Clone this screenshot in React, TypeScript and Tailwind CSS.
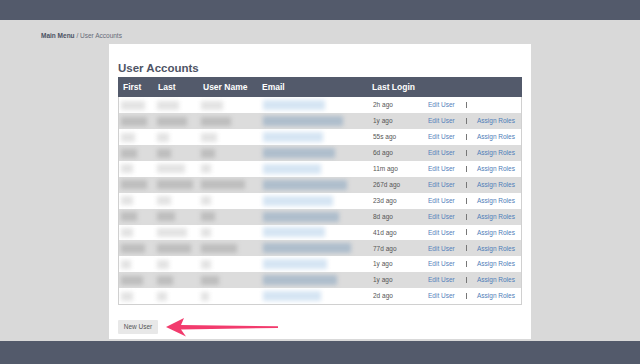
import React from 'react';

const times = [
  '2h ago',
  '1y ago',
  '55s ago',
  '6d ago',
  '11m ago',
  '267d ago',
  '23d ago',
  '8d ago',
  '41d ago',
  '77d ago',
  '1y ago',
  '1y ago',
  '2d ago',
];

// widths of the blurred-out name / email blocks, one per row
const firstW = [24, 26, 14, 16, 12, 26, 12, 16, 12, 24, 10, 22, 12];
const lastW = [22, 30, 12, 14, 28, 36, 14, 18, 30, 34, 12, 16, 10];
const userW = [22, 30, 16, 14, 10, 44, 10, 14, 10, 36, 10, 18, 8];
const emailW = [62, 80, 60, 72, 58, 84, 70, 76, 62, 88, 64, 74, 58];

function Blurred({ i }: { i: number }) {
  const odd = i % 2 === 1;
  const gray = odd ? '#bdbdbd' : '#e3e3e3';
  const blue = odd ? '#aebdcc' : '#d6e5f3';
  return (
    <div className="w-[249px] h-full overflow-hidden">
      <div className="flex items-center h-full blur-[2px]">
        <div className="w-[36px] pl-[2px]">
          <div className="h-[9px]" style={{ width: firstW[i], background: gray }} />
        </div>
        <div className="w-[44px] pl-[2px]">
          <div className="h-[9px]" style={{ width: lastW[i], background: gray }} />
        </div>
        <div className="w-[62px] pl-[2px]">
          <div className="h-[9px]" style={{ width: userW[i], background: gray }} />
        </div>
        <div className="w-[107px] pl-[2px]">
          <div className="h-[10px]" style={{ width: emailW[i], background: blue }} />
        </div>
      </div>
    </div>
  );
}

function Arrow() {
  return (
    <svg width="116" height="24" viewBox="0 0 116 24" className="ml-[7px]">
      <path d="M1 12 L19 3 L16 10 L113 11.2 L113 13 L16 14.5 L21 21.5 Z" fill="#f23b6d" />
    </svg>
  );
}

export default function App() {
  return (
    <div
      className="w-[640px] h-[364px] flex flex-col bg-[#d9d9d9] overflow-hidden"
      style={{ fontFamily: '"Liberation Sans", Arial, sans-serif' }}
    >
      <div className="h-[20px] bg-[#535a6b]" />

      <div className="flex-1 flex flex-col">
        <div className="pl-[41px] pt-[11px] h-[20px] text-[6.5px] leading-[9px] text-[#666b78]">
          <span className="font-bold text-[#4b5162]">Main Menu</span> / User Accounts
        </div>

        <div className="ml-[109px] mt-[4px] w-[422px] h-[295px] bg-white px-[9px] flex flex-col">
          <h1 className="mt-[17px] h-[18px] text-[11.5px] leading-[14px] font-bold text-[#4e5465]">
            User Accounts
          </h1>

          <div className="w-[404px]">
            <div className="h-[20px] bg-[#535a6b] flex items-center text-white text-[8.5px] font-bold">
              <div className="w-[35px] pl-[5px]">First</div>
              <div className="w-[45px] pl-[5px]">Last</div>
              <div className="w-[59px] pl-[5px]">User Name</div>
              <div className="w-[110px] pl-[5px]">Email</div>
              <div className="pl-[5px]">Last Login</div>
            </div>

            <div className="border border-t-0 border-[#d0d0d0]">
              {times.map((t, i) => (
                <div
                  key={i}
                  className={
                    'h-[15.9px] flex items-center text-[6.5px] ' +
                    (i % 2 === 1 ? 'bg-[#dcdcdc]' : 'bg-white')
                  }
                >
                  <Blurred i={i} />
                  <div className="w-[55px] pl-[5px] text-[#555]">{t}</div>
                  <div className="w-[43px] pl-[5px] text-[#5580bb]">Edit User</div>
                  <div className="w-[11px] flex">
                    <div className="w-[1px] h-[6px] bg-[#777]" />
                  </div>
                  {i > 0 && <div className="text-[#4f7db8]">Assign Roles</div>}
                </div>
              ))}
            </div>
          </div>

          <div className="mt-[10px] flex items-center">
            <button className="w-[40px] h-[14px] bg-[#e8e8e8] text-[6.5px] text-[#555] rounded-[1px]">
              New User
            </button>
            <Arrow />
          </div>
        </div>
      </div>

      <div className="h-[23px] mt-[2px] bg-[#535a6b]" />
    </div>
  );
}
